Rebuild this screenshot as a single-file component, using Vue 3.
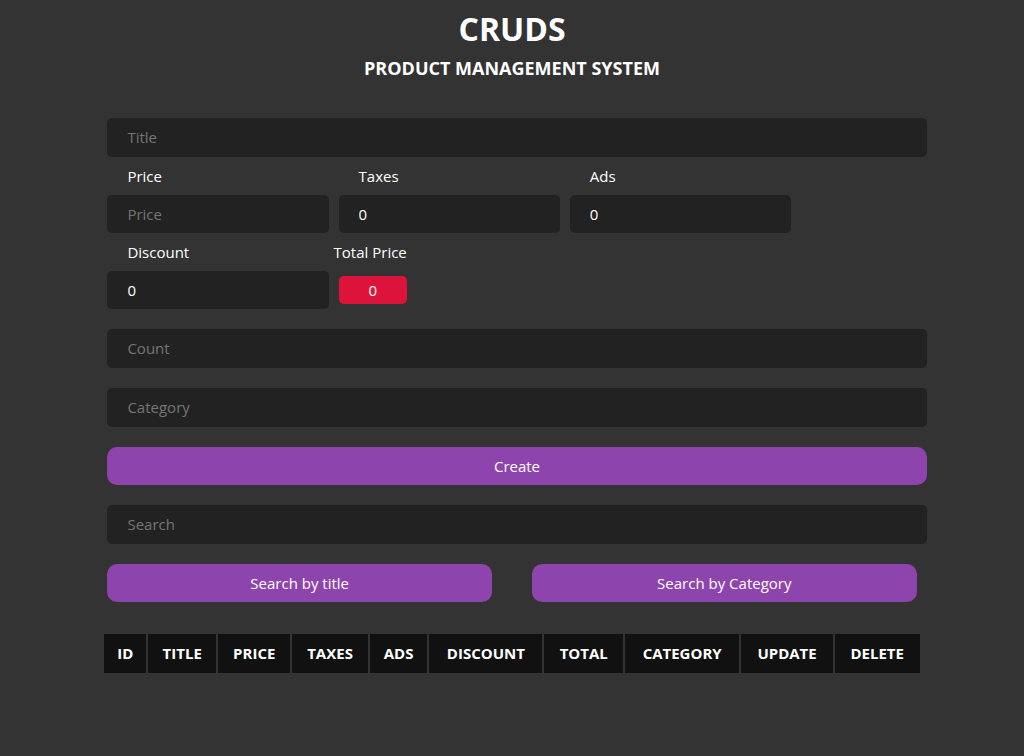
<script setup>
import { ref, computed } from 'vue'

const title = ref('')
const price = ref('')
const taxes = ref('0')
const ads = ref('0')
const discount = ref('0')
const count = ref('')
const category = ref('')
const search = ref('')

const total = computed(
  () => Number(price.value) + Number(taxes.value) + Number(ads.value) - Number(discount.value)
)

const columns = ['id', 'title', 'price', 'taxes', 'ads', 'discount', 'total', 'category', 'update', 'delete']
</script>

<template>
  <main class="crud">
    <header class="head">
      <h1>CRUDS</h1>
      <h2>PRODUCT MANAGEMENT SYSTEM</h2>
    </header>

    <form class="form" @submit.prevent>
      <input v-model="title" class="wide" type="text" placeholder="Title" aria-label="Title" />
      <div class="prices">
        <div class="field">
          <label for="price">Price</label>
          <input id="price" v-model="price" type="text" inputmode="numeric" placeholder="Price" />
        </div>
        <div class="field">
          <label for="taxes">Taxes</label>
          <input id="taxes" v-model="taxes" type="text" inputmode="numeric" />
        </div>
        <div class="field">
          <label for="ads">Ads</label>
          <input id="ads" v-model="ads" type="text" inputmode="numeric" />
        </div>
      </div>
      <div class="prices">
        <div class="field">
          <label for="discount">Discount</label>
          <input id="discount" v-model="discount" type="text" inputmode="numeric" />
        </div>
        <div class="sum">
          <label for="total">Total Price</label>
          <output id="total">{{ total }}</output>
        </div>
      </div>
      <div class="stack">
        <input v-model="count" class="wide" type="text" placeholder="Count" aria-label="Count" />
        <input v-model="category" class="wide" type="text" placeholder="Category" aria-label="Category" />
        <button type="submit">Create</button>
        <input v-model="search" class="wide" type="text" placeholder="Search" aria-label="Search" />
        <div class="search-buttons">
          <button type="button">Search by title</button>
          <button type="button">Search by Category</button>
        </div>
      </div>
    </form>

    <table class="products">
      <thead>
        <tr>
          <th v-for="name in columns" :key="name" scope="col">{{ name }}</th>
        </tr>
      </thead>
    </table>
  </main>
</template>

<style>
body {
  background: #333;
}
</style>

<style scoped>
* {
  box-sizing: border-box;
}
.crud {
  width: 80%;
  margin: 0 auto;
  color: #fff;
  font: 15px/20px "Segoe UI", "Open Sans", "Noto Sans", sans-serif;
}
.head {
  padding-top: 7px;
  text-align: center;
}
h1,
h2 {
  margin: 0;
  font-weight: 700;
}
h1 {
  font-size: 32px;
  line-height: 44px;
}
h2 {
  margin-top: 5px;
  font-size: 18px;
  line-height: 24px;
}
.form {
  margin: 38px -5px 0 5px;
}
input {
  display: block;
  width: 100%;
  height: 38px;
  padding: 0 20px;
  border: 0;
  border-radius: 5px;
  outline: none;
  background: #222;
  color: #fff;
  font: inherit;
}
input.wide {
  height: 39px;
  padding-bottom: 2px;
}
input::placeholder {
  color: #757575;
  opacity: 1;
}
.prices {
  display: flex;
  gap: 10px;
}
.field {
  width: 27%;
}
label {
  display: block;
  line-height: 38px;
}
.field label {
  padding-left: 20px;
}
.sum {
  margin-left: -5px;
}
output {
  display: block;
  margin: 5px 0 0 5px;
  border-radius: 5px;
  background: crimson;
  line-height: 28px;
  text-align: center;
}
.stack {
  display: grid;
  gap: 20px;
  margin-top: 20px;
}
button {
  width: 100%;
  height: 38px;
  padding: 0;
  border: 0;
  border-radius: 10px;
  background: #8e44ad;
  color: #fff;
  font: inherit;
  cursor: pointer;
}
.search-buttons {
  display: grid;
  grid-template-columns: 1fr 1fr;
  gap: 40px;
  margin-right: 10px;
}
.products {
  width: 100%;
  margin-top: 30px;
  border-spacing: 2px;
}
th {
  height: 39px;
  padding: 0 10px 2px;
  background: #111;
  font-weight: 700;
  text-align: center;
  text-transform: uppercase;
}
</style>
